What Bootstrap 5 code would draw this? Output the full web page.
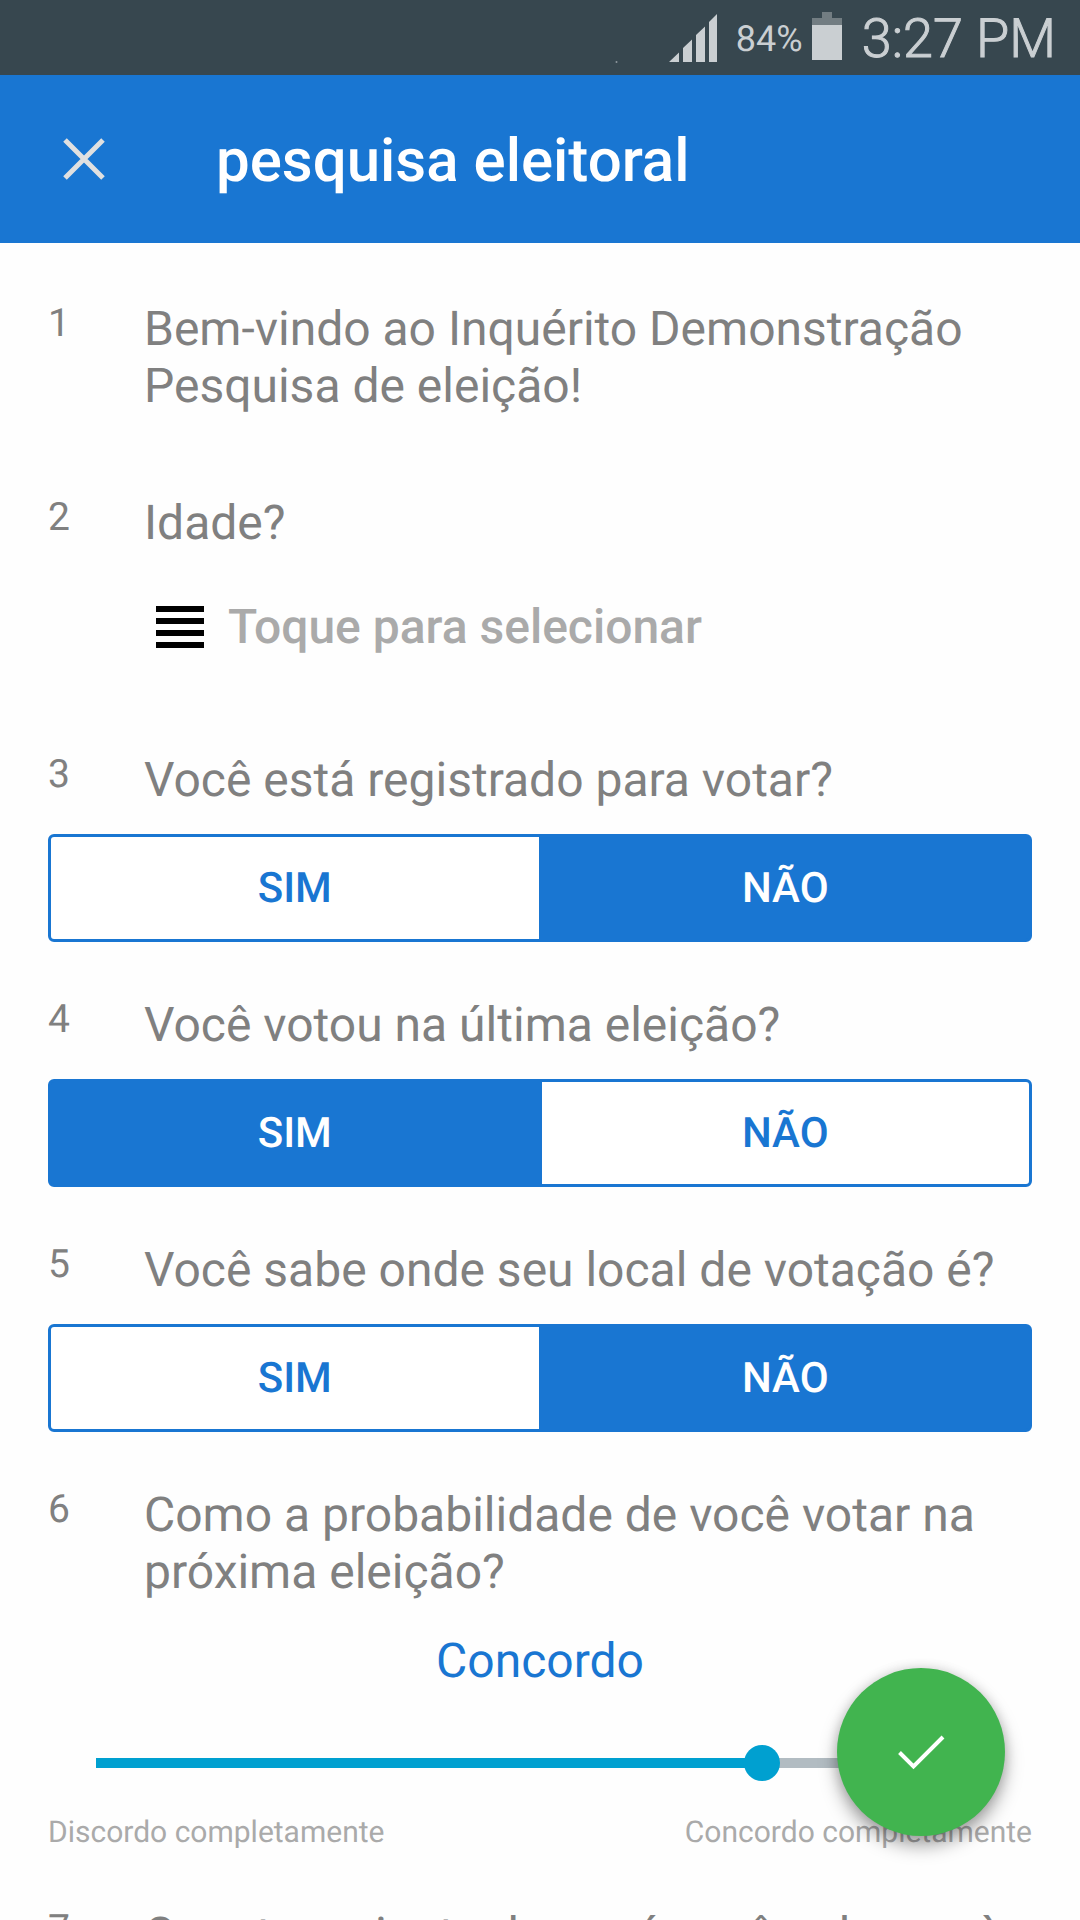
<!DOCTYPE html>
<html lang="pt-BR">
<head>
<meta charset="utf-8">
<meta name="viewport" content="width=device-width, initial-scale=1">
<title>pesquisa eleitoral</title>
<link href="https://cdn.jsdelivr.net/npm/bootstrap@5.3.0/dist/css/bootstrap.min.css" rel="stylesheet">
<style>
  :root { --brand: #1976d2; --ink: #808080; --faint: #aaa; --seek: #00a0d0; }
  body { font-family: Roboto, "Noto Sans", sans-serif; font-size: 48px; line-height: 57px; color: var(--ink); background: #fefefe; text-rendering: geometricPrecision; }

  .status-bar { height: 75px; padding-right: 24px; background: #37474f; color: #cacfd2; }
  .signal { margin-right: 18px; margin-top: 1px; }
  .battery-level { font-size: 36px; margin-right: 9px; margin-top: 4px; }
  .battery { margin-right: 20px; margin-top: -3px; }
  .clock { font-size: 54px; font-weight: 300; margin-top: 4px; -webkit-text-stroke: 1px #cacfd2; }

  .app-bar { height: 168px; padding: 0 48px; background: var(--brand); }
  .app-bar h1 { font-size: 60px; line-height: 70px; font-weight: 500; margin: 4px 0 0 96px; color: #fff; }
  .close-btn { width: 72px; height: 72px; }

  .survey { padding: 57px 48px 0; }
  .question { display: flow-root; margin: 0 0 54px; min-width: 0; }
  .question-head { margin-bottom: 26px; }
  .question-no { flex: 0 0 96px; font-size: 39px; line-height: 46px; }
  .question-text { margin: 0; font-size: 48px; line-height: 57px; }

  .picker { padding: 21px 0 42px 108px; gap: 20px; }
  .picker select { appearance: none; border: 0; padding: 0 4px; background: transparent; color: var(--faint); font-weight: 500; line-height: 57px; text-rendering: inherit; }

  .choice { width: 100%; height: 108px; }
  .choice .btn { --bs-btn-color: var(--brand); --bs-btn-border-color: var(--brand); --bs-btn-bg: #fff;
    --bs-btn-active-color: #fff; --bs-btn-active-bg: var(--brand); --bs-btn-active-border-color: var(--brand);
    --bs-btn-border-width: 3px; --bs-btn-border-radius: 6px; --bs-btn-padding-y: 0;
    flex: 1 1 0; font-size: 42px; line-height: 49px; font-weight: 500; }
  .choice .btn + .btn-check + .btn { margin-left: -3px; }

  .scale-value { margin-top: 32px; color: var(--brand); }
  .scale { padding: 56px 30px 33px; }
  .scale input { display: block; width: 100%; height: 36px; margin: 0; appearance: none; background: transparent; }
  .scale input::-webkit-slider-runnable-track { height: 10px;
    background: linear-gradient(90deg, transparent 18px, var(--seek) 18px, var(--seek) var(--pos), #b2bcc2 var(--pos), #b2bcc2 calc(100% - 18px), transparent calc(100% - 18px)); }
  .scale input::-webkit-slider-thumb { appearance: none; width: 36px; height: 36px; margin-top: -13px; border-radius: 50%; background: var(--seek); }
  .scale-ends { font-size: 30px; line-height: 38px; color: var(--faint); }

  .fab { right: 75px; bottom: 84px; width: 168px; height: 168px; border: 0; border-radius: 50%; padding: 0; background: #41b44f;
    box-shadow: 0 10px 18px rgba(0,0,0,.34), 0 0 12px rgba(0,0,0,.14); }
</style>
<script src="https://cdn.jsdelivr.net/npm/bootstrap@5.3.0/dist/js/bootstrap.bundle.min.js"></script>
</head>
<body>
<div class="vh-100 d-flex flex-column position-relative overflow-hidden">
  <div class="status-bar d-flex align-items-center justify-content-end flex-shrink-0">
    <svg class="signal" width="103" height="50" viewBox="616 12 103 50" fill="#cacfd2" aria-hidden="true">
      <circle cx="617.5" cy="61" r="1" opacity=".6"/>
      <path d="M670 61 680 51.5V61ZM684 61V47L693 38.500V61ZM697 61V34L706 25.500V61ZM710 61V21L718 13V61Z"/>
    </svg>
    <span class="battery-level">84%</span>
    <svg class="battery" width="30" height="48" viewBox="0 0 30 48" aria-hidden="true">
      <path fill="#727d82" d="M10 0H20V6H30V13H0V6H10Z"/><path fill="#cacfd2" d="M0 13H30V48H0Z"/>
    </svg>
    <span class="clock">3:27 PM</span>
  </div>

  <header class="app-bar d-flex align-items-center flex-shrink-0">
    <button type="button" class="close-btn btn p-0 border-0 d-flex align-items-center justify-content-center" aria-label="Fechar">
      <svg width="44" height="44" viewBox="0 0 44 44" fill="none" stroke="#e0e0e0" stroke-width="5"><path d="M3 3 41 41M41 3 3 41"/></svg>
    </button>
    <h1>pesquisa eleitoral</h1>
  </header>

  <main class="survey flex-grow-1 overflow-hidden">
    <section class="question">
      <div class="question-head d-flex"><span class="question-no">1</span><p class="question-text">Bem-vindo ao Inquérito Demonstração Pesquisa de eleição!</p></div>
    </section>

    <section class="question">
      <div class="question-head d-flex"><span class="question-no">2</span><label class="question-text" for="idade">Idade?</label></div>
      <div class="picker d-flex align-items-center">
        <svg width="48" height="42" viewBox="0 0 48 42" aria-hidden="true"><path d="M0 0H48V6H0ZM0 12H48V18H0ZM0 24H48V30H0ZM0 36H48V42H0Z"/></svg>
        <select id="idade"><option>Toque para selecionar</option></select>
      </div>
    </section>

    <section class="question" role="radiogroup" aria-labelledby="q3">
      <div class="question-head d-flex"><span class="question-no">3</span><p class="question-text" id="q3">Você está registrado para votar?</p></div>
      <div class="choice btn-group">
        <input type="radio" class="btn-check" name="r3" id="r3s"><label class="btn d-flex align-items-center justify-content-center" for="r3s">SIM</label>
        <input type="radio" class="btn-check" name="r3" id="r3n" checked><label class="btn d-flex align-items-center justify-content-center" for="r3n">NÃO</label>
      </div>
    </section>

    <section class="question" role="radiogroup" aria-labelledby="q4">
      <div class="question-head d-flex"><span class="question-no">4</span><p class="question-text" id="q4">Você votou na última eleição?</p></div>
      <div class="choice btn-group">
        <input type="radio" class="btn-check" name="r4" id="r4s" checked><label class="btn d-flex align-items-center justify-content-center" for="r4s">SIM</label>
        <input type="radio" class="btn-check" name="r4" id="r4n"><label class="btn d-flex align-items-center justify-content-center" for="r4n">NÃO</label>
      </div>
    </section>

    <section class="question" role="radiogroup" aria-labelledby="q5">
      <div class="question-head d-flex"><span class="question-no">5</span><p class="question-text" id="q5">Você sabe onde seu local de votação é?</p></div>
      <div class="choice btn-group">
        <input type="radio" class="btn-check" name="r5" id="r5s"><label class="btn d-flex align-items-center justify-content-center" for="r5s">SIM</label>
        <input type="radio" class="btn-check" name="r5" id="r5n" checked><label class="btn d-flex align-items-center justify-content-center" for="r5n">NÃO</label>
      </div>
    </section>

    <section class="question">
      <div class="d-flex"><span class="question-no">6</span><label class="question-text" for="q6">Como a probabilidade de você votar na próxima eleição?</label></div>
      <div class="scale-value text-center">Concordo</div>
      <div class="scale"><input type="range" id="q6" min="0" max="4" value="3" style="--pos: 75%"></div>
      <div class="scale-ends d-flex justify-content-between"><span>Discordo completamente</span><span>Concordo completamente</span></div>
    </section>

    <section class="question">
      <div class="question-head d-flex"><span class="question-no">7</span><p class="question-text">Quanto o ciente de era é você a de sua à</p></div>
    </section>
  </main>

  <button type="button" class="fab position-absolute d-flex align-items-center justify-content-center" aria-label="Concluir">
    <svg width="50" height="38" viewBox="0 0 50 38" fill="none" stroke="#fff" stroke-width="4"><path d="M3.500 19.500 17.500 33.500 47 4"/></svg>
  </button>
</div>
</body>
</html>
